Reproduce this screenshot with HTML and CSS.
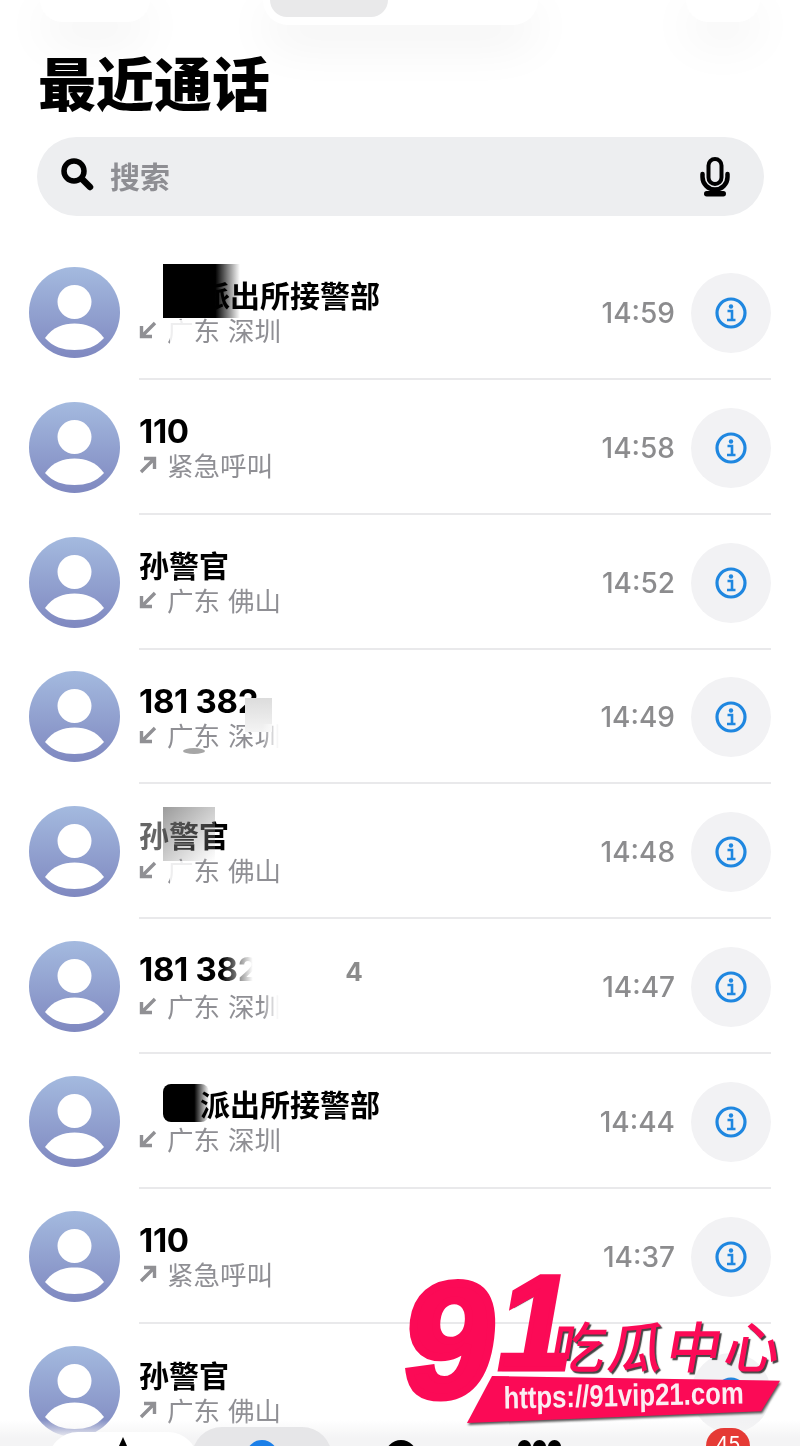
FILE: index.html
```html
<!DOCTYPE html>
<html lang="zh-CN">
<head>
<meta charset="UTF-8">
<title>最近通话</title>
<link rel="stylesheet" href="styles.css">
</head>
<body>

<svg class="defs" width="0" height="0">
  <defs>
    <linearGradient id="avatarFill" x1="0" y1="0" x2="0" y2="1">
      <stop offset="0" stop-color="#a4badf"/>
      <stop offset="1" stop-color="#7f88c0"/>
    </linearGradient>
    <symbol id="avatar" viewBox="0 0 91 91">
      <circle cx="45.5" cy="45.5" r="45.5" fill="url(#avatarFill)"/>
      <circle cx="45.5" cy="35" r="17" fill="#fff"/>
      <path d="M16 71 C24 60 34 56.500 45.500 56.500 C57 56.500 67 60 75 71 C67 80 57 83 45.500 83 C34 83 24 80 16 71 Z" fill="#fff"/>
    </symbol>
    <symbol id="arrowIn" viewBox="0 0 18 18">
      <path d="M16 2 L4 14 M2.500 5 V15.500 H13" fill="none" stroke="#909094" stroke-width="3.400"/>
    </symbol>
    <symbol id="arrowOut" viewBox="0 0 18 18">
      <path d="M2 16 L14 4 M5 2.500 H15.500 V13" fill="none" stroke="#909094" stroke-width="3.400"/>
    </symbol>
    <symbol id="info" viewBox="0 0 32 32">
      <circle cx="16" cy="16" r="14" fill="none" stroke="#1f87e0" stroke-width="3.200"/>
      <circle cx="16" cy="9.500" r="2.200" fill="#1f87e0"/>
      <path d="M12.500 14 H17 V22 M12 23 H20.500" fill="none" stroke="#1f87e0" stroke-width="2.600"/>
    </symbol>
  </defs>
</svg>

<div class="page">

  <div class="top-strip">
    <div class="pill pill-left"></div>
    <div class="pill pill-mid"><div class="pill-inner"></div></div>
    <div class="pill pill-right"></div>
  </div>

  <h1>最近通话</h1>

  <div class="search">
    <svg class="search-icon" viewBox="0 0 34 34" width="34" height="34">
      <circle cx="13" cy="13" r="10" fill="none" stroke="#000" stroke-width="5.500"/>
      <path d="M21 21 L29 29" stroke="#000" stroke-width="6.500" stroke-linecap="round"/>
    </svg>
    <span class="search-text">搜索</span>
    <svg class="mic-icon" viewBox="0 0 32 40" width="32" height="40">
      <rect x="9.500" y="2" width="13" height="25" rx="6.500" fill="none" stroke="#000" stroke-width="4"/>
      <path d="M3.500 17 V20 A12.500 12.500 0 0 0 28.500 20 V17" fill="none" stroke="#000" stroke-width="4.500" stroke-linecap="round"/>
      <path d="M16 32 V36" stroke="#000" stroke-width="4"/>
      <rect x="5" y="34" width="22" height="5.500" rx="2.700"/>
    </svg>
  </div>

  <div class="calls">

    <div class="row">
      <svg class="avatar"><use href="#avatar"/></svg>
      <div class="row-body">
        <div class="who">
          <div class="name name-cut">派出所接警部</div>
          <div class="sub"><svg class="arrow"><use href="#arrowIn"/></svg>广东 深圳</div>
        </div>
        <span class="time">14:59</span>
        <div class="info-btn"><svg class="info-icon"><use href="#info"/></svg></div>
      </div>
      <div class="mask mask-black mask-r1"></div>
      <div class="mask mask-white mask-r1b"></div>
    </div>

    <div class="row">
      <svg class="avatar"><use href="#avatar"/></svg>
      <div class="row-body">
        <div class="who">
          <div class="name num">110</div>
          <div class="sub"><svg class="arrow"><use href="#arrowOut"/></svg>紧急呼叫</div>
        </div>
        <span class="time">14:58</span>
        <div class="info-btn"><svg class="info-icon"><use href="#info"/></svg></div>
      </div>
    </div>

    <div class="row">
      <svg class="avatar"><use href="#avatar"/></svg>
      <div class="row-body">
        <div class="who">
          <div class="name">孙警官</div>
          <div class="sub"><svg class="arrow"><use href="#arrowIn"/></svg>广东 佛山</div>
        </div>
        <span class="time">14:52</span>
        <div class="info-btn"><svg class="info-icon"><use href="#info"/></svg></div>
      </div>
    </div>

    <div class="row">
      <svg class="avatar"><use href="#avatar"/></svg>
      <div class="row-body">
        <div class="who">
          <div class="name num">181 382</div>
          <div class="sub"><svg class="arrow"><use href="#arrowIn"/></svg>广东 深圳</div>
        </div>
        <span class="time">14:49</span>
        <div class="info-btn"><svg class="info-icon"><use href="#info"/></svg></div>
      </div>
      <div class="mask mask-grey mask-r4"></div>
      <div class="mask mask-smudge"></div>
      <div class="mask mask-fade mask-sub-fade"></div>
    </div>

    <div class="row">
      <svg class="avatar"><use href="#avatar"/></svg>
      <div class="row-body">
        <div class="who">
          <div class="name">孙警官</div>
          <div class="sub"><svg class="arrow"><use href="#arrowIn"/></svg>广东 佛山</div>
        </div>
        <span class="time">14:48</span>
        <div class="info-btn"><svg class="info-icon"><use href="#info"/></svg></div>
      </div>
      <div class="mask mask-wash mask-r5a"></div>
      <div class="mask mask-soft mask-r5"></div>
      <div class="mask mask-white mask-r5b"></div>
    </div>

    <div class="row">
      <svg class="avatar"><use href="#avatar"/></svg>
      <div class="row-body">
        <div class="who">
          <div class="name num">181 382<span class="last-digit">4</span></div>
          <div class="sub"><svg class="arrow"><use href="#arrowIn"/></svg>广东 深圳</div>
        </div>
        <span class="time">14:47</span>
        <div class="info-btn"><svg class="info-icon"><use href="#info"/></svg></div>
      </div>
      <div class="mask mask-fade mask-r6"></div>
      <div class="mask mask-fade mask-sub-fade"></div>
    </div>

    <div class="row">
      <svg class="avatar"><use href="#avatar"/></svg>
      <div class="row-body">
        <div class="who">
          <div class="name name-cut">派出所接警部</div>
          <div class="sub"><svg class="arrow"><use href="#arrowIn"/></svg>广东 深圳</div>
        </div>
        <span class="time">14:44</span>
        <div class="info-btn"><svg class="info-icon"><use href="#info"/></svg></div>
      </div>
      <div class="mask mask-black mask-r7"></div>
    </div>

    <div class="row">
      <svg class="avatar"><use href="#avatar"/></svg>
      <div class="row-body">
        <div class="who">
          <div class="name num">110</div>
          <div class="sub"><svg class="arrow"><use href="#arrowOut"/></svg>紧急呼叫</div>
        </div>
        <span class="time">14:37</span>
        <div class="info-btn"><svg class="info-icon"><use href="#info"/></svg></div>
      </div>
    </div>

    <div class="row">
      <svg class="avatar"><use href="#avatar"/></svg>
      <div class="row-body">
        <div class="who">
          <div class="name">孙警官</div>
          <div class="sub"><svg class="arrow"><use href="#arrowOut"/></svg>广东 佛山</div>
        </div>
        <div class="info-btn"><svg class="info-icon"><use href="#info"/></svg></div>
      </div>
    </div>

  </div>

  <div class="tabbar">
    <div class="tab"><div class="tab-back tab-back-white"></div><div class="tab-star"></div></div>
    <div class="tab"><div class="tab-back tab-back-grey"></div><div class="tab-dot tab-dot-blue"></div></div>
    <div class="tab"><div class="tab-dot tab-dot-dark"></div></div>
    <div class="tab tab-dots"><i></i><i></i><i></i></div>
    <div class="tab"><div class="badge">45</div></div>
  </div>

  <div class="watermark">
    <span class="wm-title">吃瓜中心</span>
    <span class="wm-nine">9</span>
    <span class="wm-one">1</span>
    <div class="wm-banner-wrap">
      <div class="wm-banner"><span class="wm-url">https://91vip21.com</span></div>
    </div>
  </div>

</div>

</body>
</html>
```

FILE: styles.css
```css
html, body {
  margin: 0;
  padding: 0;
  background: #fff;
}
.defs {
  display: block;
  height: 0;
}
.page {
  position: relative;
  width: 800px;
  height: 1446px;
  overflow: hidden;
  background: #fff;
  font-family: "Noto Sans CJK SC", "Noto Sans", sans-serif;
  filter: blur(0.4px);
}

/* cropped buttons at the very top */
.top-strip {
  height: 25px;
  display: flex;
  align-items: flex-end;
}
.pill {
  background: #fff;
  box-shadow: 0 16px 50px rgba(0, 0, 0, 0.08);
  position: relative;
}
.pill-left {
  width: 110px;
  height: 22px;
  margin: 0 0 3px 40px;
  border-radius: 0 0 30px 30px;
}
.pill-mid {
  width: 275px;
  height: 25px;
  margin-left: 113px;
  border-radius: 0 0 28px 28px;
}
.pill-inner {
  width: 118px;
  height: 17px;
  margin-left: 7px;
  background: #e9e9ea;
  border-radius: 0 0 26px 26px;
}
.pill-right {
  width: 74px;
  height: 22px;
  margin: 0 0 3px 148px;
  border-radius: 0 0 36px 36px;
}

h1 {
  margin: 21px 0 21px 38px;
  font-size: 58px;
  line-height: 70px;
  font-weight: 900;
  color: #000;
  position: relative;
}

.search {
  height: 79px;
  margin: 0 36px 0 37px;
  background: #edeef0;
  border-radius: 40px;
  display: flex;
  align-items: center;
  padding: 0 33px 0 24px;
}
.search-icon {
  flex: none;
  margin-top: -4px;
}
.search-text {
  flex: 1;
  margin: -4px 0 0 15px;
  font-size: 30px;
  font-weight: 700;
  color: #8e8e93;
  line-height: 40px;
}
.mic-icon {
  flex: none;
}

.calls {
  margin-top: 29px;
}
.row {
  position: relative;
  height: 134.85px;
  padding: 0 29px;
  display: flex;
  align-items: center;
  box-sizing: border-box;
}
.avatar {
  flex: none;
  width: 91px;
  height: 91px;
  margin-right: 19px;
}
.row-body {
  flex: 1;
  height: 100%;
  padding-top: 3px;
  display: flex;
  align-items: center;
  border-bottom: 2px solid #e9e9eb;
  box-sizing: border-box;
}
.row:last-child .row-body {
  border-bottom: none;
}
.who {
  flex: 1;
  margin-top: -1px;
}
.name {
  font-size: 30px;
  font-weight: 700;
  line-height: 36px;
  color: #000;
  white-space: nowrap;
  font-family: Inter, "Noto Sans CJK SC", sans-serif;
}
.num {
  font-size: 33px;
  letter-spacing: -0.3px;
}
.name-cut {
  padding-left: 61px;
}
.last-digit {
  margin-left: 87px;
  color: #8b8b8b;
  font-size: 26px;
}
.sub {
  display: flex;
  align-items: center;
  font-size: 26.5px;
  line-height: 32px;
  color: #8f8f94;
  white-space: nowrap;
  word-spacing: 2px;
}
.arrow {
  width: 18px;
  height: 18px;
  margin-right: 10px;
}
.time {
  font-family: Inter, sans-serif;
  font-size: 28px;
  font-weight: 500;
  color: #8c8c8e;
  margin-right: 16px;
}
.info-btn {
  flex: none;
  width: 80px;
  height: 80px;
  border-radius: 50%;
  background: #f2f2f4;
  display: flex;
  align-items: center;
  justify-content: center;
}
.info-icon {
  width: 32px;
  height: 32px;
}

/* redaction patches over the names */
.mask {
  position: absolute;
}
.mask-black {
  background: linear-gradient(90deg, #000 0, #000 68%, rgba(0, 0, 0, 0) 100%);
}
.mask-white {
  background: rgba(255, 255, 255, 0.85);
}
.mask-wash {
  background: rgba(255, 255, 255, 0.4);
}
.mask-r1 {
  left: 163px;
  top: 19px;
  width: 77px;
  height: 54px;
}
.mask-r1b {
  left: 170px;
  top: 75px;
  width: 22px;
  height: 26px;
}
.mask-r7 {
  left: 163px;
  top: 30px;
  width: 46px;
  height: 38px;
  border-radius: 8px;
}
.mask-r4 {
  left: 245px;
  top: 48px;
  width: 27px;
  height: 34px;
}
.mask-grey {
  background: linear-gradient(180deg, #dcdcdc, #f4f4f4);
}
.mask-smudge {
  left: 183px;
  top: 98px;
  width: 22px;
  height: 6px;
  border-radius: 50%;
  background: #a6a6a6;
}
.mask-soft {
  background: linear-gradient(135deg, rgba(130, 130, 130, 0.8), rgba(255, 255, 255, 0.1));
}
.mask-r5 {
  left: 163px;
  top: 23px;
  width: 52px;
  height: 54px;
}
.mask-r5a {
  left: 139px;
  top: 35px;
  width: 24px;
  height: 36px;
}
.mask-r5b {
  left: 170px;
  top: 77px;
  width: 22px;
  height: 24px;
}
.mask-fade {
  background: linear-gradient(90deg, rgba(255, 255, 255, 0), #fff 70%);
}
.mask-r6 {
  left: 222px;
  top: 38px;
  width: 44px;
  height: 34px;
}
.mask-sub-fade {
  left: 262px;
  top: 74px;
  width: 24px;
  height: 26px;
}

.tabbar {
  position: absolute;
  left: 0;
  right: 0;
  bottom: 0;
  height: 26px;
  padding-left: 53px;
  display: grid;
  grid-template-columns: repeat(5, 139px);
  background: linear-gradient(180deg, rgba(248, 248, 249, 0), #f4f4f5 70%);
  overflow: hidden;
}
.tab {
  position: relative;
}
.tab-back {
  position: absolute;
  top: 8px;
  left: 50%;
  height: 60px;
  transform: translateX(-50%);
}
.tab-back-white {
  top: 12px;
  width: 150px;
  background: #fff;
  border-radius: 40px;
}
.tab-back-grey {
  top: 7px;
  width: 140px;
  background: #e6e6e8;
  border-radius: 40px;
}
.tab-star {
  position: absolute;
  left: 50%;
  top: 17px;
  margin-left: -8px;
  width: 0;
  height: 0;
  border-left: 8px solid transparent;
  border-right: 8px solid transparent;
  border-bottom: 18px solid #000;
}
.tab-dot {
  position: absolute;
  left: 50%;
  top: 20px;
  width: 32px;
  height: 32px;
  margin-left: -16px;
  border-radius: 50%;
}
.tab-dot-blue {
  background: #1b7fe8;
}
.tab-dot-dark {
  background: #000;
}
.tab-dots {
  display: flex;
  justify-content: center;
  gap: 2px;
  padding-top: 20px;
}
.tab-dots i {
  width: 13px;
  height: 13px;
  border-radius: 50%;
  background: #000;
}
.badge {
  position: absolute;
  left: 97px;
  top: 8px;
  width: 44px;
  height: 36px;
  border-radius: 22px;
  background: #e53a35;
  color: #fff;
  font-family: Inter, sans-serif;
  font-size: 20px;
  line-height: 32px;
  text-align: center;
}

/* watermark logo, its parts sit on their own canvas */
.watermark {
  position: absolute;
  left: 395px;
  top: 1265px;
  width: 400px;
  height: 165px;
  color: #fb0a56;
}
.wm-nine, .wm-one, .wm-title {
  position: absolute;
  line-height: 1;
  white-space: nowrap;
  text-shadow: 2px 2px 1px #444;
}
.wm-nine {
  left: 11px;
  top: -6px;
  font-family: "Liberation Sans", sans-serif;
  font-size: 162px;
  font-weight: 700;
  -webkit-text-stroke: 8px #fb0a56;
  transform: skewX(-7deg);
}
.wm-one {
  left: 105px;
  top: -9px;
  font-family: "Liberation Sans", sans-serif;
  font-size: 134px;
  font-weight: 700;
  -webkit-text-stroke: 5px #fb0a56;
  transform: skewX(-10deg);
}
.wm-title {
  left: 157px;
  top: 52px;
  font-size: 55px;
  font-weight: 500;
  letter-spacing: 3px;
  transform: skewX(-10deg);
}
.wm-banner-wrap {
  position: absolute;
  left: 72px;
  top: 111px;
  filter: drop-shadow(1px 2px 1px #555);
}
.wm-banner {
  width: 313px;
  height: 47px;
  background: #fb0a56;
  clip-path: polygon(8% 0, 100% 10%, 94% 75%, 0 100%);
  display: flex;
  justify-content: center;
}
.wm-url {
  display: block;
  font-family: "Liberation Sans", sans-serif;
  font-size: 31px;
  font-weight: 700;
  line-height: 40px;
  color: #fbeef2;
  white-space: nowrap;
  transform: scaleX(0.83) rotate(-1deg);
}
```
